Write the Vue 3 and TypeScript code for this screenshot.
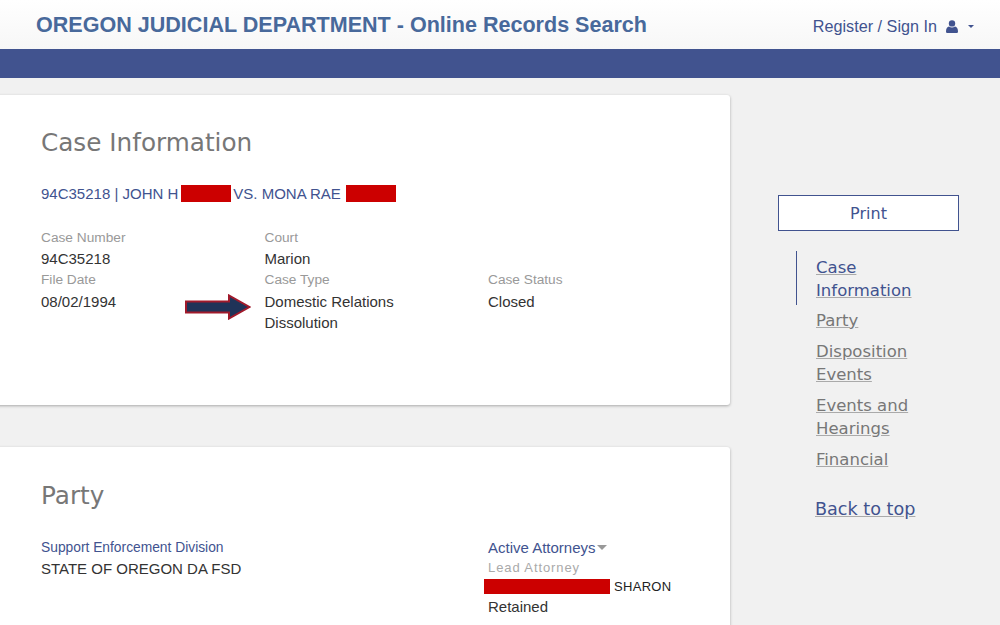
<template>
  <div class="page">
    <header class="top">
      <div class="title">OREGON JUDICIAL DEPARTMENT - Online Records Search</div>
      <div class="user">
        <span>Register / Sign In</span>
        <svg class="user-icon" viewBox="0 0 12 13" width="12" height="13">
          <circle cx="6" cy="3.4" r="3.2" fill="#41538f" />
          <path d="M0 11.4C0 8.6 1.2 6.6 3 6.4c.9.7 1.9 1 3 1s2.100-.3 3-1c1.800.2 3 2.200 3 5 0 1-.7 1.600-1.600 1.600H1.600C.7 13 0 12.400 0 11.400Z" fill="#41538f" />
        </svg>
        <span class="caret"></span>
      </div>
    </header>
    <div class="band"></div>

    <div class="content">
      <main class="cards">
        <section class="card first">
          <h2>Case Information</h2>
          <div class="case-line">
            <span>94C35218 | JOHN H</span>
            <span class="redact name-a"></span>
            <span>VS. MONA RAE</span>
            <span class="redact name-b"></span>
          </div>
          <div class="fields">
            <div class="col">
              <div class="lbl">Case Number</div>
              <div class="val">94C35218</div>
              <div class="lbl">File Date</div>
              <div class="val">08/02/1994</div>
            </div>
            <div class="col">
              <div class="lbl">Court</div>
              <div class="val">Marion</div>
              <div class="lbl">Case Type</div>
              <div class="val">Domestic Relations</div>
              <div class="val">Dissolution</div>
              <svg class="arrow" viewBox="0 0 66 26" width="66" height="26">
                <path d="M1 7.500H44V1.500L64.500 13 44 24.500V18.500H1Z" fill="#1f3358" stroke="#a11a2b" stroke-width="2" />
              </svg>
            </div>
            <div class="col">
              <div class="lbl">&nbsp;</div>
              <div class="val">&nbsp;</div>
              <div class="lbl">Case Status</div>
              <div class="val">Closed</div>
            </div>
          </div>
        </section>

        <section class="card second">
          <h2>Party</h2>
          <div class="fields party">
            <div class="col wide">
              <div class="party-name">Support Enforcement Division</div>
              <div class="val">STATE OF OREGON DA FSD</div>
            </div>
            <div class="col">
              <div class="attorneys">Active Attorneys<span class="mini-caret"></span></div>
              <div class="lead">Lead Attorney</div>
              <div class="atty">
                <span class="redact name-c"></span>
                <span class="sharon">SHARON</span>
              </div>
              <div class="val">Retained</div>
            </div>
          </div>
        </section>
      </main>

      <aside class="side">
        <button class="print">Print</button>
        <nav class="links">
          <a
            v-for="link in links"
            :key="link.text"
            href="#"
            class="link"
            :class="{ active: link.active }"
            @click.prevent
          ><span>{{ link.text }}</span></a>
        </nav>
        <a href="#" class="back" @click.prevent>Back to top</a>
      </aside>
    </div>
  </div>
</template>

<script setup lang="ts">
interface SideLink {
  text: string
  active?: boolean
}

const links: SideLink[] = [
  { text: 'Case Information', active: true },
  { text: 'Party' },
  { text: 'Disposition Events' },
  { text: 'Events and Hearings' },
  { text: 'Financial' },
]
</script>

<style scoped>
.page {
  height: 625px;
  overflow: hidden;
  background: #f1f1f1;
  font-family: "Liberation Sans", Arial, sans-serif;
  font-size: 15px;
  color: #333;
}
.top {
  height: 49px;
  box-sizing: border-box;
  padding: 0 26px 0 36px;
  display: flex;
  justify-content: space-between;
  align-items: center;
  background: linear-gradient(#fff, #f7f7f7);
}
.title {
  font-size: 21.55px;
  font-weight: bold;
  color: #48699b;
}
.user {
  display: flex;
  align-items: center;
  font-size: 16.2px;
  color: #41538f;
  margin-top: 4px;
}
.user-icon {
  margin-left: 9px;
}
.caret {
  margin-left: 10px;
  border-left: 3px solid transparent;
  border-right: 3px solid transparent;
  border-top: 3px solid #41538f;
}
.band {
  height: 29px;
  background: #41538f;
}
.content {
  display: flex;
  padding-top: 17px;
}
.cards {
  width: 735px;
  margin-left: -5px;
  flex: none;
}
.card {
  background: #fff;
  border-radius: 3px;
  box-shadow: 0 1px 3px rgba(0, 0, 0, 0.3);
  padding: 33px 0 0 46px;
  box-sizing: border-box;
}
.first {
  height: 310px;
}
.second {
  height: 260px;
  margin-top: 42px;
  padding-top: 34px;
}
h2 {
  margin: 0;
  font-family: "DejaVu Sans", Verdana, sans-serif;
  font-size: 24.7px;
  font-weight: normal;
  line-height: 30px;
  color: #777;
}
.case-line {
  margin-top: 27px;
  height: 17px;
  display: flex;
  align-items: center;
  color: #41538f;
}
.redact {
  display: inline-block;
  background: #cc0000;
}
.name-a {
  width: 50px;
  height: 17px;
  margin: 0 2px 0 3px;
}
.name-b {
  width: 50px;
  height: 17px;
  margin-left: 5px;
}
.name-c {
  width: 126px;
  height: 15px;
  margin-left: -4px;
}
.fields {
  display: grid;
  grid-template-columns: 223.5px 223.5px 1fr;
  margin-top: 24.5px;
  line-height: 21.4px;
}
.col {
  position: relative;
}
.wide {
  grid-column: span 2;
}
.lbl {
  font-size: 13.7px;
  color: #999;
}
.val {
  color: #333;
}
.arrow {
  position: absolute;
  left: -80px;
  top: 67px;
}
.party {
  margin-top: 25.5px;
}
.party-name {
  font-size: 13.8px;
  color: #41538f;
}
.attorneys {
  display: flex;
  align-items: center;
  color: #41538f;
}
.mini-caret {
  margin-left: 1px;
  margin-top: 1px;
  border-left: 5px solid transparent;
  border-right: 5px solid transparent;
  border-top: 5px solid #999;
}
.lead {
  margin-top: 1px;
  font-size: 13px;
  letter-spacing: 0.9px;
  color: #aaa;
  line-height: 17px;
}
.atty {
  display: flex;
  align-items: center;
  height: 19px;
  margin-top: 1px;
}
.sharon {
  font-size: 13px;
  letter-spacing: 0.3px;
  color: #222;
  margin-left: 4px;
}
.side {
  flex: none;
  width: 270px;
  box-sizing: border-box;
  padding: 100px 0 0 48px;
  font-family: "DejaVu Sans", Verdana, sans-serif;
}
.print {
  display: block;
  width: 181px;
  height: 36px;
  box-sizing: border-box;
  background: #fff;
  border: 1px solid #41538f;
  color: #41538f;
  font-family: inherit;
  font-size: 16px;
}
.links {
  margin-top: 20px;
  width: 120px;
  margin-left: 18px;
  display: flex;
  flex-direction: column;
  gap: 8px;
}
.link {
  display: block;
  padding-left: 20px;
  line-height: 23px;
  font-size: 16.5px;
  color: #777;
  text-decoration: underline;
  text-decoration-color: #aaa;
}
.link.active {
  color: #41538f;
  border-left: 1px solid #41538f;
  padding-left: 19px;
  padding-top: 5px;
  padding-bottom: 3px;
  margin-bottom: -4px;
}
.back {
  display: block;
  margin: 28px 0 0 37px;
  font-size: 17.6px;
  color: #41538f;
  text-decoration: underline;
  text-decoration-color: #aaa;
}
</style>

<style>
html,
body {
  background: #f1f1f1;
  overflow: hidden;
}
</style>
